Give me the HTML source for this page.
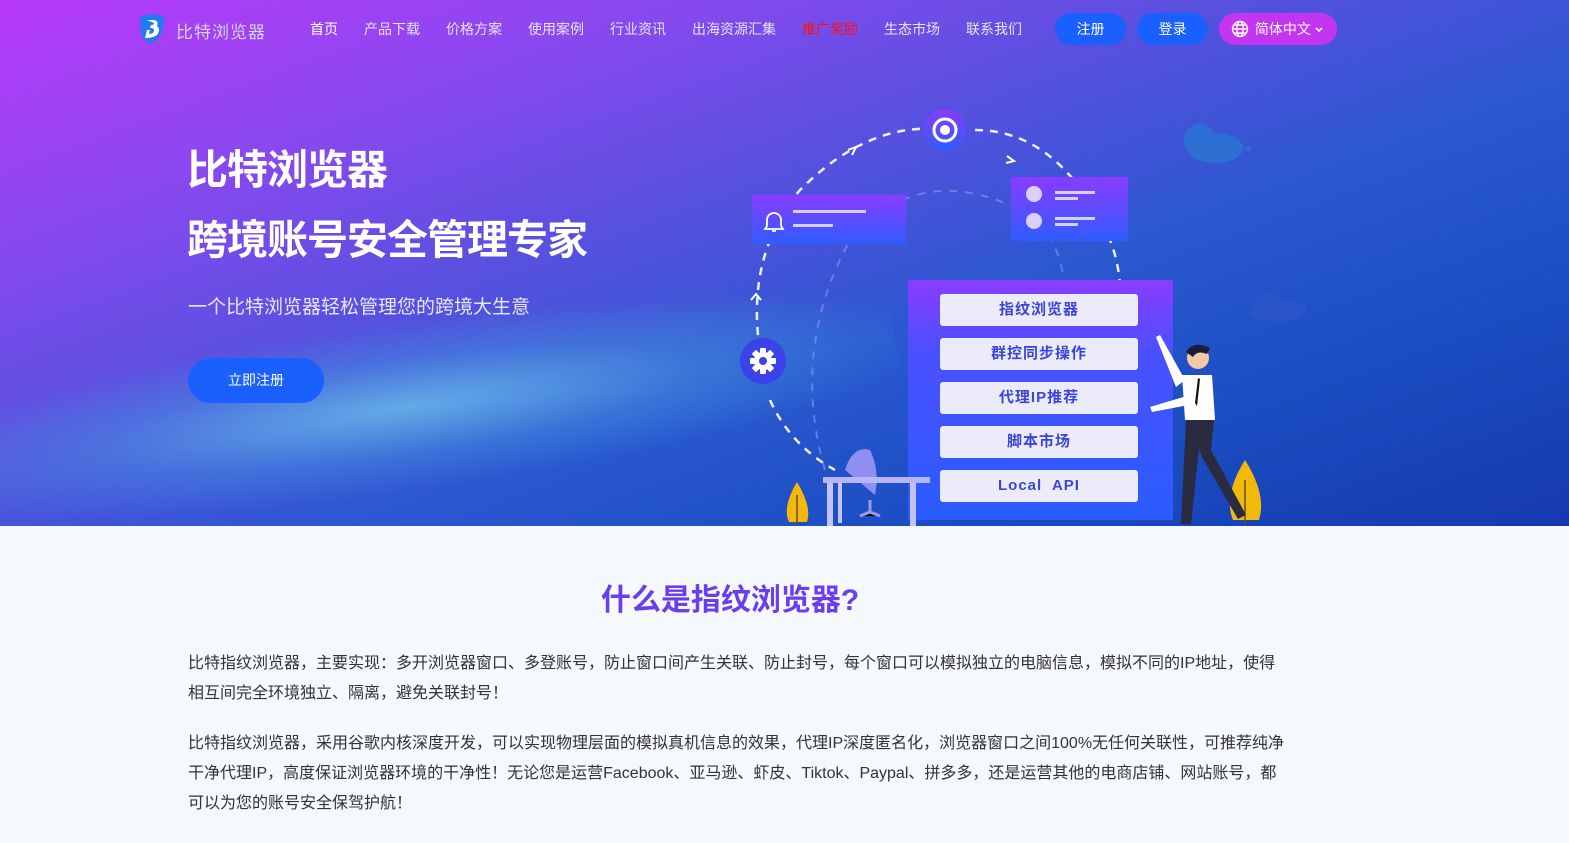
<!DOCTYPE html>
<html><head><meta charset="utf-8"><style>
*{margin:0;padding:0;box-sizing:border-box}
body{width:1569px;height:843px;overflow:hidden;font-family:"Liberation Sans","Noto Sans CJK SC",sans-serif;background:#f5f8fc;position:relative}
.hero{position:absolute;left:0;top:0;width:1569px;height:526px;overflow:hidden;
background:linear-gradient(160deg,#b83af8 0%,#8a48f0 22%,#5a50e0 40%,#2a58d0 60%,#1a4cc0 80%,#1638b0 100%);}
.band{position:absolute;left:-200px;top:330px;width:1100px;height:170px;transform:rotate(-8deg);
background:radial-gradient(ellipse 50% 50% at 55% 50%,rgba(110,200,235,.75),rgba(70,170,225,.35) 55%,rgba(40,150,215,0) 100%)}
.a{position:absolute}
.nav{color:#e4e4f8;font-size:14px;top:19px}
.btn{position:absolute;top:13px;height:32px;border-radius:16px;background:#1a60ff;color:#fff;font-size:14px;text-align:center;line-height:32px}
.card{position:absolute;left:940px;width:198px;height:32px;background:#ecebfb;border-radius:3px;color:#3a45d8;font-size:15px;font-weight:bold;text-align:center;line-height:32px;letter-spacing:1px}
p.t{position:absolute;left:188px;width:1100px;font-size:16px;color:#333;line-height:30px}
</style></head><body>
<div class="hero">
<div class="band"></div>
<svg class="a" style="left:137px;top:13px" width="30" height="32" viewBox="0 0 30 32"><path d="M3 4 Q15 -1 27 4 L25 20 Q20 28 13 31 Q6 27 4 20 Z" fill="#1e7bf0"/><path d="M10 7 H17 Q22 8 20 13 Q24 16 20 22 Q16 25 8 25 L10 17 L13 17 L12 21 Q17 21 17 17 Q17 15 13 15 L14 12 Q17 12 17 10 Z" fill="#fff"/></svg>
<div class="a" style="left:176px;top:18px;font-size:17px;color:#d4d4ec;letter-spacing:1px">比特浏览器</div>
<div class="a nav" style="left:310px;color:#fff">首页</div>
<div class="a nav" style="left:364px">产品下载</div>
<div class="a nav" style="left:446px">价格方案</div>
<div class="a nav" style="left:528px">使用案例</div>
<div class="a nav" style="left:610px">行业资讯</div>
<div class="a nav" style="left:692px">出海资源汇集</div>
<div class="a nav" style="left:802px;color:#ff1010">推广奖励</div>
<div class="a nav" style="left:884px">生态市场</div>
<div class="a nav" style="left:966px">联系我们</div>
<div class="btn" style="left:1055px;width:71px">注册</div>
<div class="btn" style="left:1137px;width:71px">登录</div>
<div class="btn" style="left:1219px;width:118px;background:#c435f0;text-align:left;padding-left:12px">
<svg style="vertical-align:-4px" width="18" height="18" viewBox="0 0 18 18" fill="none" stroke="#fff" stroke-width="1.4"><circle cx="9" cy="9" r="7.5"/><ellipse cx="9" cy="9" rx="3.2" ry="7.5"/><path d="M1.5 9h15M3 5h12M3 13h12"/></svg>
<span style="margin-left:2px">简体中文</span><svg style="vertical-align:0;margin-left:3px" width="10" height="8" viewBox="0 0 10 8"><path d="M2 2l3 3 3-3" stroke="#fff" stroke-width="1.6" fill="none"/></svg></div>

<div class="a" style="left:187px;top:136px;font-size:41px;font-weight:bold;color:#fff;letter-spacing:-1px">比特浏览器</div>
<div class="a" style="left:187px;top:206px;font-size:41px;font-weight:bold;color:#fff;letter-spacing:-1px">跨境账号安全管理专家</div>
<div class="a" style="left:188px;top:292px;font-size:19px;color:#e8e6fa">一个比特浏览器轻松管理您的跨境大生意</div>
<div class="a" style="left:188px;top:358px;width:136px;height:45px;border-radius:23px;background:#1a60ff;color:#fff;font-size:14px;text-align:center;line-height:45px">立即注册</div>

<svg class="a" style="left:730px;top:100px" width="580" height="426" viewBox="0 0 580 426">
<g fill="none" stroke="#fff" stroke-width="2.5" stroke-dasharray="8 7" opacity=".9">
<path d="M28 235 Q20 150 70 90 Q140 20 215 30"/>
<path d="M245 30 Q330 30 380 140 Q388 160 390 185"/>
<path d="M40 300 Q60 345 105 370"/>
</g>
<g fill="none" stroke="#9aa8f0" stroke-width="2" stroke-dasharray="8 8" opacity=".5"><path d="M95 370 Q60 250 120 140 Q190 60 290 110 Q330 130 335 190"/></g>
<path d="M118 50 l8 -3 -4 8 M21 200 l5 -6 5 6" stroke="#fff" stroke-width="2" fill="none"/>
<path d="M277 56 l7 5 -8 2" stroke="#fff" stroke-width="2" fill="none"/>
<ellipse cx="485" cy="48" rx="28" ry="15" fill="#2e6fd4"/><circle cx="470" cy="40" r="16" fill="#2e6fd4"/><circle cx="506" cy="48" r="4" fill="#2e6fd4"/><circle cx="518" cy="49" r="2.5" fill="#2e6fd4"/>
<ellipse cx="548" cy="210" rx="28" ry="12" fill="#2a55c8"/><circle cx="538" cy="205" r="13" fill="#2a55c8"/>
<defs>
<linearGradient id="g1" x1="0" y1="0" x2="0" y2="1"><stop offset="0" stop-color="#8a3cff"/><stop offset="1" stop-color="#2f5cff"/></linearGradient>
<linearGradient id="g2" x1="0" y1="0" x2="0" y2="1"><stop offset="0" stop-color="#8a3cff"/><stop offset=".3" stop-color="#4a50ff"/><stop offset="1" stop-color="#2a5cff"/></linearGradient>
</defs>
<circle cx="215" cy="30" r="21" fill="url(#g1)"/><circle cx="215" cy="30" r="11" fill="none" stroke="#fff" stroke-width="3"/><circle cx="215" cy="30" r="5" fill="#fff"/>
<rect x="22" y="95" width="154" height="49" fill="url(#g1)"/>
<path d="M37 126 v-6 a7 7 0 0 1 14 0 v6 l2 3 h-18 z M42 131 h4" stroke="#fff" stroke-width="1.8" fill="none"/>
<rect x="63" y="110" width="73" height="3" fill="#d6d0ff"/><rect x="63" y="124" width="40" height="3" fill="#d6d0ff"/>
<rect x="281" y="77" width="117" height="64" fill="url(#g1)"/>
<circle cx="304" cy="94" r="8" fill="#d8d0ff"/><circle cx="304" cy="121" r="8" fill="#d8d0ff"/>
<rect x="325" y="91" width="40" height="3" fill="#d6d0ff"/><rect x="325" y="97" width="23" height="3" fill="#d6d0ff"/>
<rect x="325" y="117" width="40" height="3" fill="#d6d0ff"/><rect x="325" y="123" width="23" height="3" fill="#d6d0ff"/>
<circle cx="33" cy="261" r="23" fill="#3a42e8"/>
<g transform="translate(33 261)" fill="#fff"><rect x="-3" y="-13" width="6" height="26" rx="1"/><rect x="-3" y="-13" width="6" height="26" rx="1" transform="rotate(45)"/><rect x="-3" y="-13" width="6" height="26" rx="1" transform="rotate(90)"/><rect x="-3" y="-13" width="6" height="26" rx="1" transform="rotate(135)"/><circle r="9"/></g>
<circle cx="33" cy="261" r="4" fill="#3a42e8"/>
<rect x="178" y="180" width="265" height="240" fill="url(#g2)"/>
<path d="M115 370 q8 -25 25 -20 q10 20 5 45 z" fill="#8f8ef2"/>
<rect x="93" y="377" width="107" height="6" fill="#b7b6f6"/>
<rect x="97" y="383" width="6" height="43" fill="#c4c3f6"/><rect x="180" y="383" width="6" height="43" fill="#c4c3f6"/><rect x="108" y="383" width="4" height="40" fill="#c4c3f6"/>
<path d="M140 400 v12 M130 416 l10 -4 10 4" stroke="#9a98f0" stroke-width="3"/>
<path d="M67 382 q-15 25 -8 40 h18 q5 -15 -10 -40z" fill="#f2b90a"/><path d="M67 395 v31" stroke="#6b4a10" stroke-width="1.5"/>
<path d="M515 360 q-22 35 -12 60 h26 q8 -25 -14 -60z" fill="#f2b90a"/><path d="M515 380 v46" stroke="#6b4a10" stroke-width="1.5"/>
<circle cx="468" cy="258" r="11" fill="#f3c8a6"/><path d="M456 252 q8 -12 24 -4 l-3 6 q-10 -4 -14 3z" fill="#1c1c3a"/>
<path d="M452 275 h30 l3 45 h-30 z" fill="#fff"/>
<path d="M455 280 l-25 -45 -4 2 20 50 z" fill="#fff"/>
<path d="M460 295 l-40 12 2 5 42 -8z" fill="#fff"/>
<path d="M456 320 h28 l-3 30 35 65 -8 4 -35 -60 -4 -10 -8 75 -10 0 z" fill="#2a2a40"/>
<path d="M468 278 l-3 25 2 3 3 -27z" fill="#111"/>
</svg>
<div class="card" style="top:294px">指纹浏览器</div>
<div class="card" style="top:338px">群控同步操作</div>
<div class="card" style="top:382px">代理IP推荐</div>
<div class="card" style="top:426px">脚本市场</div>
<div class="card" style="top:470px;font-family:'Liberation Sans',sans-serif">Local&nbsp; API</div>
</div>

<div class="a" style="left:0;top:575px;width:1460px;text-align:center;font-size:30px;font-weight:bold;color:#6a3ef0">什么是指纹浏览器?</div>
<p class="t" style="top:649px">比特指纹浏览器，主要实现：多开浏览器窗口、多登账号，防止窗口间产生关联、防止封号，每个窗口可以模拟独立的电脑信息，模拟不同的IP地址，使得相互间完全环境独立、隔离，避免关联封号！</p>
<p class="t" style="top:729px">比特指纹浏览器，采用谷歌内核深度开发，可以实现物理层面的模拟真机信息的效果，代理IP深度匿名化，浏览器窗口之间100%无任何关联性，可推荐纯净干净代理IP，高度保证浏览器环境的干净性！无论您是运营Facebook、亚马逊、虾皮、Tiktok、Paypal、拼多多，还是运营其他的电商店铺、网站账号，都可以为您的账号安全保驾护航！</p>
</body></html>
